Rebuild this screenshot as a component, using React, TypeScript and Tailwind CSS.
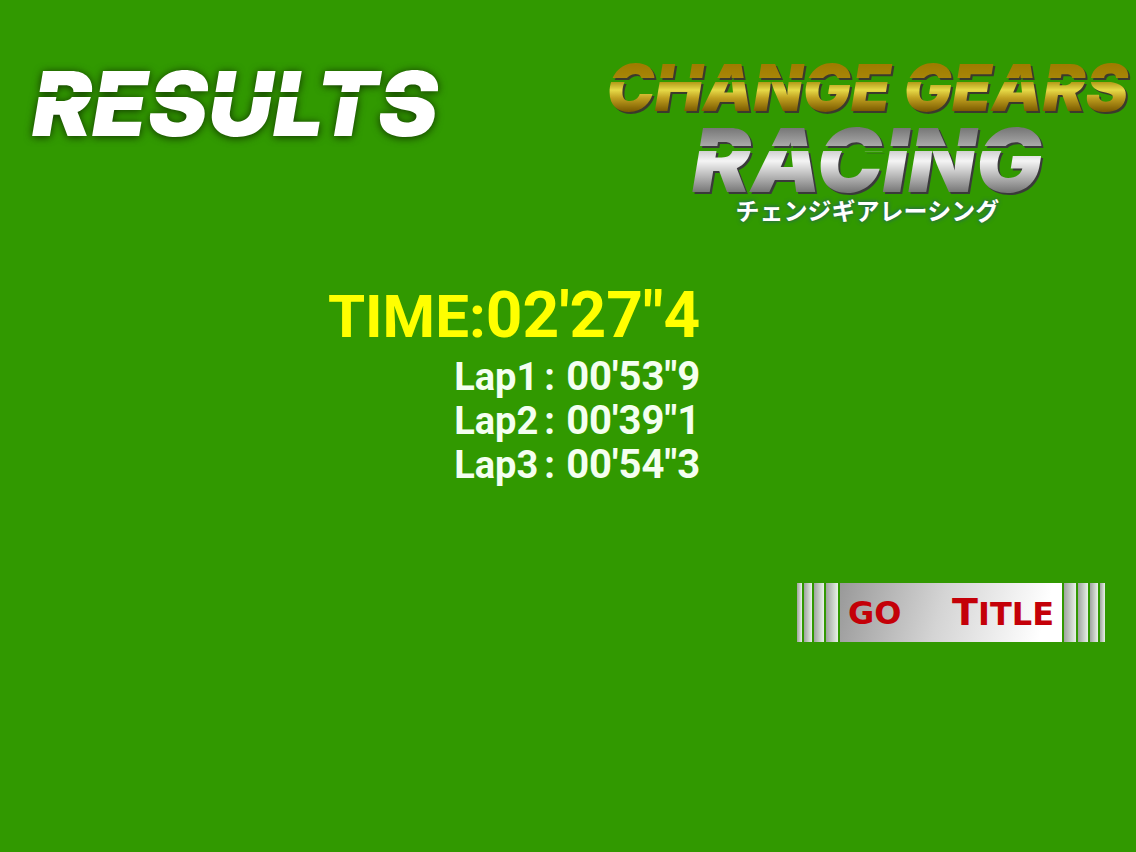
import React from 'react'
import clsx from 'clsx'

const laps = [
  { label: 'Lap1', time: '00\'53"9' },
  { label: 'Lap2', time: '00\'39"1' },
  { label: 'Lap3', time: '00\'54"3' }
]

interface SlicedTextProps {
  className?: string
  children: React.ReactNode
}

// Heavy italic lettering, the gradient leaves a transparent slit across it
const SlicedText: React.FC<SlicedTextProps> = ({ className, children }) => (
  <span
    className={clsx(
      'block bg-clip-text px-2 font-["Inter",sans-serif] font-black italic text-transparent whitespace-nowrap',
      className
    )}
  >
    {children}
  </span>
)

const Bar: React.FC<{ className: string }> = ({ className }) => (
  <span
    className={clsx('h-full shrink-0 bg-linear-to-r from-[#a0a4a0] to-[#e8f2e6]', className)}
  />
)

const Logo: React.FC = () => (
  <div className="flex flex-col items-center">
    <div className="drop-shadow-[2px_2px_0px_#3b3a2c]">
      <SlicedText className="bg-[linear-gradient(#a07c00_9px,#a88608_22px,transparent_22px,transparent_26px,#b39a18_26px,#e6da48_34px,#c0a020_42px,#7c5c00_55px)] text-[64px] leading-[64px]">
        CHANGE GEARS
      </SlicedText>
    </div>
    <div className="drop-shadow-[2px_2px_0px_#3a3a3a]">
      <SlicedText className="bg-[linear-gradient(#777_8px,#aaa_26px,transparent_26px,transparent_31px,#d0d0d0_31px,#f4f4f4_41px,#c4c4c4_53px,#777_72px)] text-[88px] leading-[80px]">
        RACING
      </SlicedText>
    </div>
    <p className="font-['Noto_Sans_CJK_JP',sans-serif] text-[24px] leading-[20px] font-bold text-white text-shadow-[0_0_4px_#20507c]">
      チェンジギアレーシング
    </p>
  </div>
)

const App: React.FC = () => {
  return (
    <main className="min-h-screen overflow-hidden bg-[#319900]">
      <header className="flex items-start justify-between pt-14 pl-6">
        <h1 className="mt-1 drop-shadow-[0px_1px_4px_#103000]">
          <SlicedText className="bg-[linear-gradient(#fff_32px,transparent_32px,transparent_37px,#fff_37px)] text-[90px] leading-[88px]">
            RESULTS
          </SlicedText>
        </h1>
        <Logo />
      </header>

      <section className="mx-auto mt-16 w-fit pr-[108px] font-['Roboto',sans-serif] font-bold">
        <p className="flex items-baseline leading-[64px] text-[#ffff00]">
          <span className="text-[60px]">TIME:</span>
          <span className="text-[64px]">02'27"4</span>
        </p>
        <dl className="mt-1.5 flex flex-col items-end text-[#f4fff0]">
          {laps.map((lap) => (
            <div key={lap.label} className="flex items-baseline leading-[43px]">
              <dt className="flex w-28 text-[38px]">
                <span className="w-[90px]">{lap.label}</span>:
              </dt>
              <dd className="text-[40px]">{lap.time}</dd>
            </div>
          ))}
        </dl>
      </section>

      <footer className="mt-24 flex justify-end pr-[31px]">
        <button type="button" className="flex h-[59px] w-[308px] cursor-pointer gap-0.5">
          <Bar className="w-[5px]" />
          <Bar className="w-2" />
          <Bar className="w-2.5" />
          <Bar className="w-3" />
          <span className="flex h-full grow items-center justify-between bg-[linear-gradient(105deg,#999,#d4d4d4_45%,#fff_90%)] px-2 font-['DejaVu_Sans',sans-serif] text-[32px] leading-[36px] font-bold text-[#c40008]">
            <span>GO</span>
            <span>
              <span className="text-[38px]">T</span>ITLE
            </span>
          </span>
          <Bar className="w-3" />
          <Bar className="w-2.5" />
          <Bar className="w-2" />
          <Bar className="w-[5px]" />
        </button>
      </footer>
    </main>
  )
}

export default App
